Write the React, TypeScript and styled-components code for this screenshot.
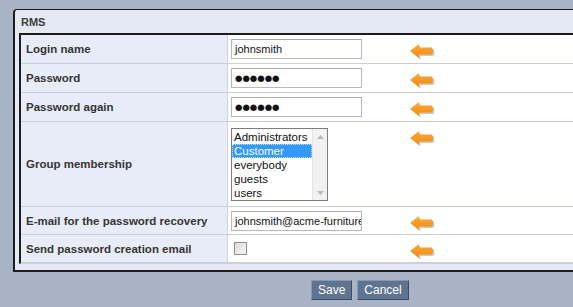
import React from "react";
import styled, { createGlobalStyle } from "styled-components";

const GlobalStyle = createGlobalStyle`
  html, body {
    margin: 0;
    padding: 0;
    background-color: #a8b3c8;
    overflow: hidden;
    font-family: 'Liberation Sans', Arial, sans-serif;
  }
`;

const StyledPage = styled.div`
  width: 573px;
  height: 307px;
  padding: 9px 0 0 13px;
  box-sizing: border-box;
  overflow: hidden;
`;

const StyledPanel = styled.div`
  width: 620px;
  background-color: #e5e9f3;
  border-top: 1px solid #1c1c1c;
  border-left: 2px solid #1c1c1c;
  border-bottom: 2px solid #1c1c1c;
  border-top-left-radius: 4px;
  padding: 0 0 6px 4px;
`;

const StyledPanelTitle = styled.div`
  height: 23px;
  display: flex;
  align-items: center;
  padding-left: 2px;
  font-size: 11px;
  font-weight: bold;
  color: #3c3c3c;
`;

const StyledTable = styled.div`
  display: grid;
  grid-template-columns: 207px 181px 1fr;
  border-top: 2px solid #1c1c1c;
  border-left: 2px solid #1c1c1c;
  border-bottom: 1px solid #ccd1dc;
  background-color: #ffffff;
`;

const StyledLabel = styled.div<{ $h: number }>`
  height: ${(p) => p.$h}px;
  box-sizing: border-box;
  display: flex;
  align-items: center;
  padding-left: 5px;
  background-color: #e8ecf6;
  border-right: 1px solid #cdd2dc;
  border-bottom: 1px solid #c9ced9;
  font-size: 11.5px;
  font-weight: bold;
  color: #353535;
`;

const StyledValue = styled.div`
  display: flex;
  align-items: center;
  padding-left: 3px;
  border-bottom: 1px solid #c9ced9;
  min-height: 0;
`;

const StyledArrowCell = styled.div`
  padding-top: 8px;
  border-bottom: 1px solid #c9ced9;
  box-sizing: border-box;
  min-height: 0;

  svg {
    display: block;
  }
`;

const StyledField = styled.div<{ $dots?: boolean }>`
  width: 131px;
  height: 20px;
  box-sizing: border-box;
  border: 1px solid #b9b9b9;
  border-top-color: #a8a8a8;
  background: #fff;
  font-size: ${(p) => (p.$dots ? "8.5px" : "11px")};
  color: #111;
  padding-left: 3px;
  line-height: 18px;
  white-space: nowrap;
  overflow: hidden;
  font-family: ${(p) => (p.$dots ? "'DejaVu Sans', sans-serif" : "'Liberation Sans', Arial, sans-serif")};
`;

const StyledList = styled.div`
  width: 97px;
  height: 73px;
  box-sizing: border-box;
  border: 1px solid #7d7d7d;
  display: flex;
  background: #fff;
`;

const StyledOptions = styled.div`
  flex: 1;
  padding-top: 1px;
`;

const StyledOption = styled.div<{ $selected?: boolean }>`
  height: 14px;
  line-height: 14px;
  font-size: 11.5px;
  padding-left: 2px;
  color: ${(p) => (p.$selected ? "#ffffff" : "#111")};
  background: ${(p) => (p.$selected ? "#3399ff" : "transparent")};
  outline: ${(p) => (p.$selected ? "1px dotted #c9e2ff" : "none")};
  outline-offset: -1px;
`;

const StyledScrollbar = styled.div`
  width: 15px;
  background: #f1f1f1;
  border-left: 1px solid #e3e3e3;
  display: flex;
  flex-direction: column;
  justify-content: space-between;
  align-items: center;
  padding: 6px 0 5px;
  box-sizing: border-box;

  svg {
    display: block;
  }
`;

const StyledCheckbox = styled.span`
  display: inline-block;
  width: 13px;
  height: 13px;
  box-sizing: border-box;
  margin-left: 3px;
  border: 1px solid #8e8f8f;
  background: linear-gradient(135deg, #dcdcdc, #f6f6f6);
`;

const StyledActions = styled.div`
  display: flex;
  gap: 5px;
  padding: 8px 0 0 298px;
`;

const StyledButton = styled.button`
  height: 20px;
  padding: 0 6px;
  background-color: #5e7491;
  color: #ffffff;
  font-family: 'Liberation Sans', Arial, sans-serif;
  font-size: 12px;
  border: 1px solid #3c4b60;
  border-top-color: #8898b0;
  border-left-color: #8898b0;
  border-radius: 0;
`;

function Arrow() {
  return (
    <svg width="27" height="18" viewBox="0 0 27 18">
      <defs>
        <linearGradient id="ag" x1="0" y1="0" x2="0" y2="1">
          <stop offset="0" stopColor="#fca93a" />
          <stop offset="1" stopColor="#f28a0f" />
        </linearGradient>
      </defs>
      <path d="M3 9.5 L11.5 2.5 L11.5 6 L23.5 6 Q25.5 6 25.5 9.5 Q25.5 13 23.5 13 L11.5 13 L11.5 16.5 Z" fill="#8a8a8a" opacity="0.45" />
      <path d="M1 8 L10 1 L10 4.5 L22 4.5 Q24 4.5 24 8 Q24 11.5 22 11.5 L10 11.5 L10 15 Z" fill="url(#ag)" />
    </svg>
  );
}

const groups = ["Administrators", "Customer", "everybody", "guests", "users"];

export default function App() {
  const rows: { label: string; h: number; content: React.ReactNode }[] = [
    { label: "Login name", h: 29, content: <StyledField>johnsmith</StyledField> },
    { label: "Password", h: 29, content: <StyledField $dots>●●●●●●</StyledField> },
    { label: "Password again", h: 29, content: <StyledField $dots>●●●●●●</StyledField> },
    {
      label: "Group membership",
      h: 85,
      content: (
        <StyledList>
          <StyledOptions>
            {groups.map((g) => (
              <StyledOption key={g} $selected={g === "Customer"}>{g}</StyledOption>
            ))}
          </StyledOptions>
          <StyledScrollbar>
            <svg width="7" height="4"><path d="M0 4 L3.5 0 L7 4 Z" fill="#b8b8b8" /></svg>
            <svg width="7" height="4"><path d="M0 0 L3.5 4 L7 0 Z" fill="#b8b8b8" /></svg>
          </StyledScrollbar>
        </StyledList>
      ),
    },
    { label: "E-mail for the password recovery", h: 28, content: <StyledField>johnsmith@acme-furniture.com</StyledField> },
    { label: "Send password creation email", h: 28, content: <StyledCheckbox /> },
  ];

  return (
    <StyledPage>
      <GlobalStyle />
      <StyledPanel>
        <StyledPanelTitle>RMS</StyledPanelTitle>
        <StyledTable>
          {rows.map((r) => (
            <React.Fragment key={r.label}>
              <StyledLabel $h={r.h}>{r.label}</StyledLabel>
              <StyledValue>{r.content}</StyledValue>
              <StyledArrowCell>
                <Arrow />
              </StyledArrowCell>
            </React.Fragment>
          ))}
        </StyledTable>
      </StyledPanel>
      <StyledActions>
        <StyledButton>Save</StyledButton>
        <StyledButton>Cancel</StyledButton>
      </StyledActions>
    </StyledPage>
  );
}
